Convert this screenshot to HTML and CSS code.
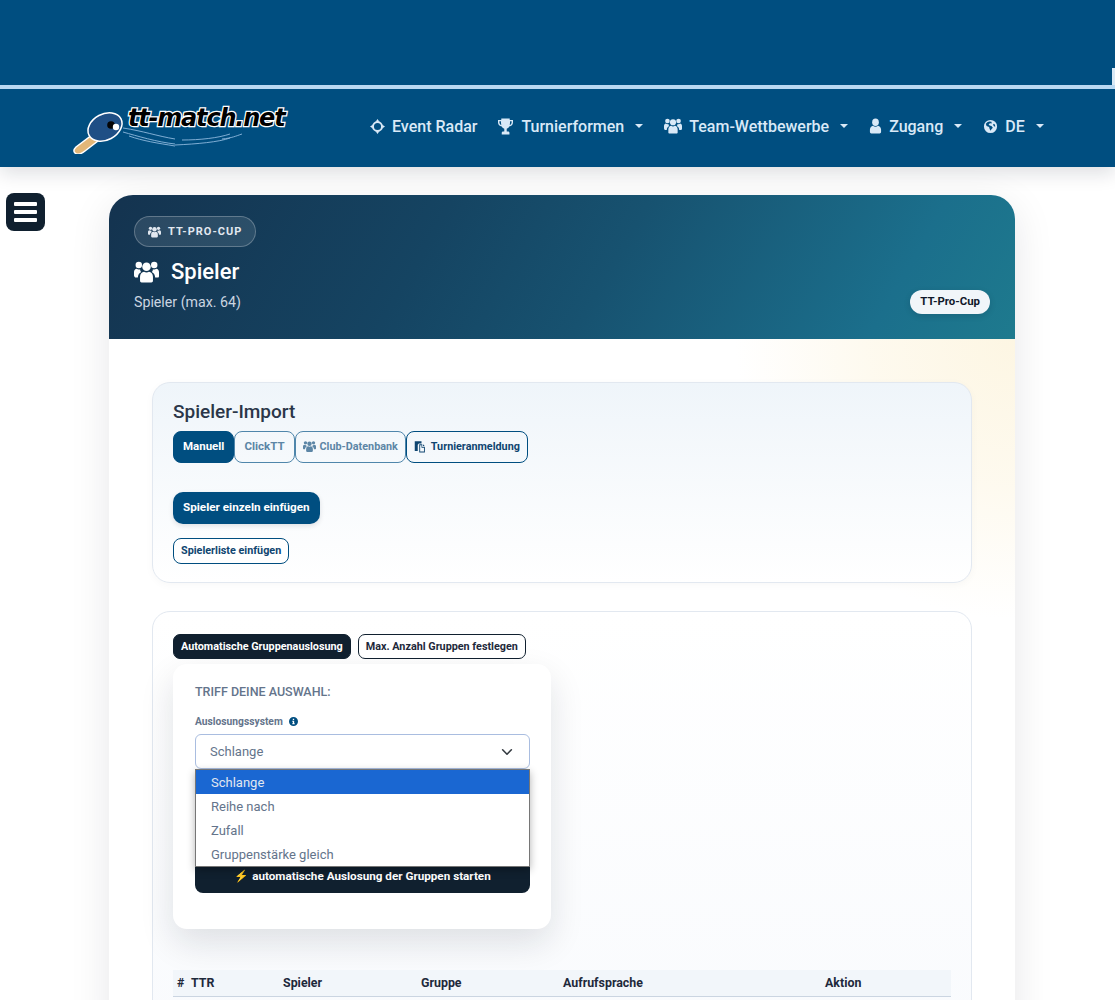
FILE: index.html
```html
<!doctype html>
<html lang="de">
  <head>
    <title>tt-match.net - Spieler</title>
    <meta charset="utf-8" />
    <meta name="viewport" content="width=device-width, initial-scale=1" />
    <link rel="stylesheet" href="styles.css">
  </head>
  <body>
    <svg class="icon-defs" width="0" height="0">
      <symbol id="i-users" viewBox="0 0 24 20">
        <circle cx="4.600" cy="3.300" r="3.100"/>
        <circle cx="19.400" cy="3.300" r="3.100"/>
        <circle cx="12" cy="5" r="4.100"/>
        <path d="M5.800 18.500v-4c0-2.700 1.800-4.600 3.800-4.800.7.500 1.500.8 2.400.8s1.700-.3 2.400-.8c2 .2 3.800 2.100 3.800 4.800v4c0 .9-.7 1.500-1.500 1.500H7.300c-.8 0-1.500-.6-1.500-1.500z"/>
        <path d="M0 13V10c0-1.800 1.200-3 2.600-3.200.6.400 1.300.7 2 .7.500 0 .9-.1 1.300-.2-.1 1 .3 2 1 2.800-1.900.9-3.100 2.800-3.200 5.200H1.200C.5 14.500 0 13.900 0 13z"/>
        <path d="M24 13V10c0-1.800-1.200-3-2.600-3.200-.6.400-1.300.7-2 .7-.5 0-.9-.1-1.300-.2.100 1-.3 2-1 2.800 1.900.9 3.100 2.800 3.200 5.200h2.500c.7 0 1.200-.6 1.200-1.500z"/>
      </symbol>
      <symbol id="i-user" viewBox="0 0 14 16">
        <ellipse cx="7" cy="4" rx="3.600" ry="4"/>
        <path d="M1 14.500v-2.800C1 9.800 2.600 8.200 4.300 7.700c.7.700 1.700 1.100 2.700 1.100s2-.4 2.700-1.100c1.700.5 3.300 2.100 3.300 4v2.800c0 .9-.7 1.500-1.500 1.500h-9C1.700 16 1 15.400 1 14.500z"/>
      </symbol>
      <symbol id="i-trophy" viewBox="0 0 16 17"><path fill-rule="evenodd" d="M3.500 0h9v1.500H16v2.700c0 2.300-1.700 4-4 4.300-.6 1.200-1.500 2-2.700 2.300v3h1.500c.9 0 1.400.6 1.400 1.400V17H4v-1.800c0-.8.500-1.400 1.400-1.400h1.300v-3C5.500 10.500 4.600 9.700 4 8.500c-2.300-.3-4-2-4-4.300V1.500h3.500V0zM1.500 3v1.200c0 1.300.9 2.400 2 2.700-.2-1.200-.4-2.500-.4-3.900H1.500zm13 0h-1.600c0 1.400-.2 2.700-.4 3.900 1.100-.3 2-1.400 2-2.700V3z"/></symbol>
      <symbol id="i-target" viewBox="0 0 16 16"><circle cx="8" cy="8" r="4.800" fill="none" stroke="currentColor" stroke-width="2"/><path d="M8 0l2 3H6zM8 16l-2-3h4zM0 8l3-2v4zM16 8l-3 2V6z"/></symbol>
      <symbol id="i-globe" viewBox="0 0 16 16"><path fill-rule="evenodd" d="M8 1a7 7 0 1 1 0 14A7 7 0 0 1 8 1zM5 3.200L3 5l.8 2.400 2.700 1 .5 2 1 2 1-1.600 1.500-1.500-1.500-1.800-2-.5L6 5.600l1.500-1 1.800.2L9 2.800 7 2.600zM11.500 5l-.8 1.200 1 1.500 1.300.5-.200-2z"/></symbol>
      <symbol id="i-paste" viewBox="0 0 16 16"><path d="M1 1h9v3H6.500L5 5.500V14H1z"/><path fill-rule="evenodd" d="M7 5h4v3.500h3.500V16H7zM12 5l2.500 2.500H12zM8.200 6.200v8.600h5.100V9.700h-3.300V6.200z"/></symbol>
      <symbol id="i-info" viewBox="0 0 16 16"><path fill-rule="evenodd" d="M8 0a8 8 0 1 1 0 16A8 8 0 0 1 8 0zM6.800 3v2.300h2.400V3zM5.800 6.600v1.700h1v2.900h-1V13h4.400v-1.800h-1V6.600z"/></symbol>
    </svg>

    <div class="topbar"><span class="topbar-notch"></span></div>

    <nav class="navbar">
      <a class="brand">
        <svg class="logo" viewBox="0 0 220 56" width="220" height="56">
          <path class="logo-handle" d="M5 55c-2-2-1-4 1-6l16-12 6 6-13 10c-4 3-8 4-10 2z"/>
          <ellipse class="logo-paddle" cx="35" cy="29" rx="18" ry="13" transform="rotate(-28 35 29)"/>
          <circle cx="41" cy="27" r="3.800" fill="#050505"/>
          <circle cx="46" cy="29" r="3.200" fill="#fff"/>
          <path class="logo-trail" d="M53 30c20 3 34 8 52 11M53 34c14 4 34 10 52 12M59 38c14 5 28 7 46 10M105 47c22-1 44-3 55-7M112 42c18 0 36-2 48-6M152 41c10-1 14-3 20-5"/>
          <text class="logo-text" x="58" y="28">tt-match.net</text>
        </svg>
      </a>
      <ul class="nav-list">
        <li class="nav-item"><svg class="nav-icon"><use href="#i-target"/></svg>Event Radar</li>
        <li class="nav-item nav-drop"><svg class="nav-icon nav-icon-trophy"><use href="#i-trophy"/></svg>Turnierformen</li>
        <li class="nav-item nav-drop"><svg class="nav-icon nav-icon-users"><use href="#i-users"/></svg>Team-Wettbewerbe</li>
        <li class="nav-item nav-drop"><svg class="nav-icon nav-icon-user"><use href="#i-user"/></svg>Zugang</li>
        <li class="nav-item nav-drop"><svg class="nav-icon"><use href="#i-globe"/></svg>DE</li>
      </ul>
    </nav>

    <button class="side-toggle" aria-label="Menü"><span></span><span></span><span></span></button>

    <main class="page">
      <section class="main-card">
        <header class="card-head">
          <div class="head-left">
            <span class="head-pill"><svg class="pill-icon"><use href="#i-users"/></svg>TT-PRO-CUP</span>
            <h1 class="head-title"><svg class="title-icon"><use href="#i-users"/></svg>Spieler</h1>
            <p class="head-sub">Spieler (max. 64)</p>
          </div>
          <span class="head-badge">TT-Pro-Cup</span>
        </header>

        <div class="card-body">
          <section class="panel panel-import">
            <h2 class="panel-title">Spieler-Import</h2>
            <div class="tabs">
              <a class="tab tab-active">Manuell</a>
              <a class="tab tab-muted">ClickTT</a>
              <a class="tab tab-muted tab-iconed"><svg class="tab-icon tab-icon-users"><use href="#i-users"/></svg>Club-Datenbank</a>
              <a class="tab tab-strong tab-iconed"><svg class="tab-icon"><use href="#i-paste"/></svg>Turnieranmeldung</a>
            </div>
            <a class="btn btn-blue">Spieler einzeln einfügen</a>
            <a class="btn btn-outline">Spielerliste einfügen</a>
          </section>

          <section class="panel panel-groups">
            <div class="group-tabs">
              <a class="gtab gtab-active">Automatische Gruppenauslosung</a>
              <a class="gtab">Max. Anzahl Gruppen festlegen</a>
            </div>
            <div class="choice-box">
              <div class="choice-title">TRIFF DEINE AUSWAHL:</div>
              <label class="choice-label">Auslosungssystem <svg class="info-icon"><use href="#i-info"/></svg></label>
              <div class="select-wrap">
                <div class="select-box">Schlange
                  <svg class="select-arrow" viewBox="0 0 16 16" width="14" height="14"><path d="M3 5.500l5 5 5-5" fill="none" stroke="#343a40" stroke-width="1.800" stroke-linecap="round" stroke-linejoin="round"/></svg>
                </div>
                <ul class="select-list">
                  <li class="select-opt select-opt-on">Schlange</li>
                  <li class="select-opt">Reihe nach</li>
                  <li class="select-opt">Zufall</li>
                  <li class="select-opt">Gruppenstärke gleich</li>
                </ul>
              </div>
              <a class="start-btn"><span class="bolt">⚡</span> automatische Auslosung der Gruppen starten</a>
            </div>

            <table class="player-table">
              <thead>
                <tr>
                  <th class="col-num">#</th>
                  <th class="col-ttr">TTR</th>
                  <th class="col-name">Spieler</th>
                  <th class="col-group">Gruppe</th>
                  <th class="col-lang">Aufrufsprache</th>
                  <th class="col-action">Aktion</th>
                </tr>
              </thead>
            </table>
          </section>
        </div>
      </section>
    </main>
  </body>
</html>
```

FILE: styles.css
```css
* {
	box-sizing: border-box;
	padding: 0;
	margin: 0;
}

html, body {
	height: 1000px;
	overflow: hidden;
}

body {
	position: relative;
	background: #fff;
	font-family: Roboto, "Liberation Sans", sans-serif;
	color: #1e293b;
}

a {
	text-decoration: none;
}

ul {
	list-style: none;
}

.icon-defs {
	position: absolute;
}

svg {
	fill: currentColor;
}

/* top area */
.topbar {
	position: relative;
	height: 85px;
	background: #004e80;
}

.topbar-notch {
	position: absolute;
	right: 0;
	top: 68px;
	width: 3px;
	height: 17px;
	background: #d8e8f5;
}

.navbar {
	display: flex;
	align-items: center;
	height: 82px;
	padding-left: 70px;
	border-top: 4px solid #b9d8f2;
	background: #004e80;
	box-shadow: 0 6px 18px rgba(15, 23, 42, 0.14);
}

.brand {
	display: block;
	height: 56px;
	margin-top: -4px;
}

.logo-handle {
	fill: #e3b778;
	stroke: #fff;
	stroke-width: 1.500;
}

.logo-paddle {
	fill: #1f4f85;
	stroke: #fff;
	stroke-width: 1.500;
}

.logo-trail {
	fill: none;
	stroke: #8db8dc;
	stroke-width: 0.900;
}

.logo-text {
	font-family: "DejaVu Sans", sans-serif;
	font-size: 24px;
	font-weight: bold;
	font-style: italic;
	letter-spacing: -1.200px;
	fill: #000;
	stroke: #fff;
	stroke-width: 2.500px;
	paint-order: stroke;
}

.nav-list {
	display: flex;
	margin-left: 69.500px;
	margin-top: -4px;
}

.nav-item {
	display: flex;
	align-items: center;
	padding: 0 10.500px;
	color: #d9e9f7;
	font-size: 16px;
	font-weight: 500;
	white-space: nowrap;
}

.nav-drop::after {
	content: "";
	margin-left: 11px;
	border-top: 4px solid #d9e9f7;
	border-left: 4px solid transparent;
	border-right: 4px solid transparent;
}

.nav-icon {
	flex: none;
	margin-right: 7px;
	width: 15px;
	height: 15px;
}

.nav-icon-trophy {
	height: 17px;
	margin-right: 8px;
}

.nav-icon-users {
	width: 18px;
	height: 16px;
}

.nav-icon-user {
	width: 13px;
	height: 16px;
}

.side-toggle {
	position: absolute;
	left: 6px;
	top: 193px;
	display: flex;
	flex-direction: column;
	justify-content: center;
	gap: 4px;
	width: 39px;
	height: 38px;
	padding: 0 8px;
	border: none;
	border-radius: 8px;
	background: #10202f;
}

.side-toggle span {
	display: block;
	height: 4px;
	border-radius: 1px;
	background: #fff;
}

/* main card */
.page {
	padding: 28px 100px 0 109px;
}

.main-card {
	width: 906px;
	border-radius: 24px;
	background: #fff;
	box-shadow: 0 10px 40px rgba(15, 23, 42, 0.1);
}

.card-head {
	display: flex;
	justify-content: space-between;
	align-items: flex-end;
	height: 144px;
	padding: 21px 25px 25px;
	border-radius: 24px 24px 0 0;
	background: linear-gradient(120deg, #14334f 0%, #154462 35%, #175270 55%, #1b6f8c 85%, #1e7a8e 100%);
}

.head-left {
	align-self: flex-start;
}

.head-pill {
	display: inline-flex;
	align-items: center;
	height: 31px;
	padding: 0 13px;
	border: 1px solid rgba(255, 255, 255, 0.25);
	border-radius: 16px;
	background: rgba(255, 255, 255, 0.1);
	color: #e2e8f0;
	font-size: 11px;
	font-weight: 700;
	letter-spacing: 1px;
}

.pill-icon {
	width: 13px;
	height: 12px;
	margin-right: 7px;
}

.head-title {
	display: flex;
	align-items: center;
	margin-top: 9px;
	color: #fff;
	font-size: 22px;
	font-weight: 500;
	line-height: 32px;
}

.title-icon {
	width: 25px;
	height: 22px;
	margin-right: 12px;
}

.head-sub {
	margin-top: 5px;
	color: #cbd5e1;
	font-size: 14.200px;
	line-height: 18px;
}

.head-badge {
	padding: 5px 10px;
	height: 24px;
	border-radius: 12px;
	background: #f1f5f9;
	color: #0f172a;
	font-size: 11.400px;
	font-weight: 700;
	line-height: 13px;
	box-shadow: 0 2px 6px rgba(15, 23, 42, 0.15);
}

.card-body {
	height: 700px;
	padding: 43px 43px 0;
	background: radial-gradient(circle at 100% 0, #fdf6e3 0, rgba(253, 246, 227, 0.6) 140px, rgba(255, 255, 255, 0) 280px);
}

.panel {
	border: 1px solid #e2e8f0;
	border-radius: 18px;
	padding: 20px;
}

.panel-import {
	height: 201px;
	background: linear-gradient(180deg, #eff5fa 0%, #ffffff 100%);
	box-shadow: 0 2px 8px rgba(15, 23, 42, 0.03);
}

.panel-title {
	color: #2b3648;
	font-size: 19px;
	font-weight: 500;
	line-height: 18px;
}

.tabs {
	display: flex;
	margin-top: 10px;
}

.tab {
	display: flex;
	align-items: center;
	height: 32px;
	padding: 0 9px 2px;
	border: 1px solid #004e80;
	border-radius: 8px;
	font-size: 11.500px;
	font-weight: 700;
}

.tab-iconed {
	padding: 0 7px 2px;
	font-size: 10.800px;
}

.tab-active {
	background: #004e80;
	color: #fff;
}

.tab-muted {
	border-color: #4f86ab;
	color: #5c86a6;
}

.tab-strong {
	color: #0f4570;
}

.tab-icon {
	width: 12px;
	height: 13px;
	margin-right: 5px;
}

.tab-icon-users {
	width: 13px;
	height: 11px;
	margin-right: 4px;
}

.btn {
	display: table;
	font-weight: 700;
}

.btn-blue {
	margin-top: 29px;
	padding: 0 10px;
	height: 32px;
	border-radius: 10px;
	background: #004e80;
	color: #fff;
	font-size: 11.700px;
	line-height: 31px;
	box-shadow: 0 2px 5px rgba(15, 23, 42, 0.12);
}

.btn-outline {
	margin-top: 14px;
	padding: 0 7px;
	height: 26px;
	border: 1px solid #004e80;
	border-radius: 8px;
	background: #fff;
	color: #0f4570;
	font-size: 10.800px;
	line-height: 24px;
}

.panel-groups {
	height: 500px;
	margin-top: 28px;
	padding-top: 22px;
	background: linear-gradient(180deg, #fff 0%, #f8fafd 100%);
}

.group-tabs {
	display: flex;
	gap: 7px;
}

.gtab {
	height: 25px;
	padding: 0 7px;
	border: 1px solid #10202f;
	border-radius: 7px;
	background: #fff;
	color: #1e293b;
	font-size: 10.800px;
	font-weight: 700;
	line-height: 23px;
}

.gtab-active {
	background: #10202f;
	color: #fff;
}

.choice-box {
	width: 378px;
	height: 265px;
	margin-top: 5px;
	padding: 21px 21px 22px 22px;
	border-radius: 14px;
	background: #fff;
	box-shadow: 0 14px 34px rgba(15, 23, 42, 0.12);
}

.choice-title {
	color: #64748b;
	font-size: 12.500px;
	font-weight: 500;
	line-height: 13px;
}

.choice-label {
	display: flex;
	align-items: center;
	gap: 6px;
	margin-top: 17px;
	color: #64748b;
	font-size: 10.250px;
	font-weight: 700;
	line-height: 13px;
}

.info-icon {
	width: 9px;
	height: 9px;
	color: #004e80;
}

.select-wrap {
	position: relative;
	margin-top: 6px;
}

.select-box {
	display: flex;
	justify-content: space-between;
	align-items: center;
	height: 35px;
	padding: 0 15px 0 14px;
	border: 1px solid #a9bde0;
	border-radius: 6px;
	background: #fff;
	color: #64748b;
	font-size: 13px;
}

.select-arrow {
	flex: none;
}

.select-list {
	position: absolute;
	z-index: 5;
	left: 0;
	right: 0;
	top: 35px;
	height: 98px;
	border: 1px solid #767676;
	background: #fff;
	box-shadow: 0 3px 8px rgba(0, 0, 0, 0.3);
}

.select-opt {
	height: 24px;
	padding-left: 15px;
	color: #64748b;
	font-size: 13px;
	line-height: 25px;
}

.select-opt-on {
	background: #1a67d2;
	color: #e2e8f0;
}

.start-btn {
	display: block;
	height: 36px;
	margin-top: 88px;
	padding-top: 13px;
	border-radius: 8px;
	background: #10202f;
	color: #fff;
	font-size: 11.700px;
	font-weight: 700;
	line-height: 13px;
	text-align: center;
}

.bolt {
	color: #f5c542;
}

.player-table {
	width: 778px;
	margin-top: 41px;
	border-collapse: collapse;
	table-layout: fixed;
}

.player-table th {
	height: 26px;
	padding: 0 4px;
	border-bottom: 1px solid #cbd5e1;
	background: #f2f6fa;
	color: #1e293b;
	font-size: 12.400px;
	font-weight: 700;
	text-align: left;
}

.col-num { width: 14px; }
.col-ttr { width: 92px; }
.col-name { width: 138px; }
.col-group { width: 142px; }
.col-lang { width: 262px; }
```
